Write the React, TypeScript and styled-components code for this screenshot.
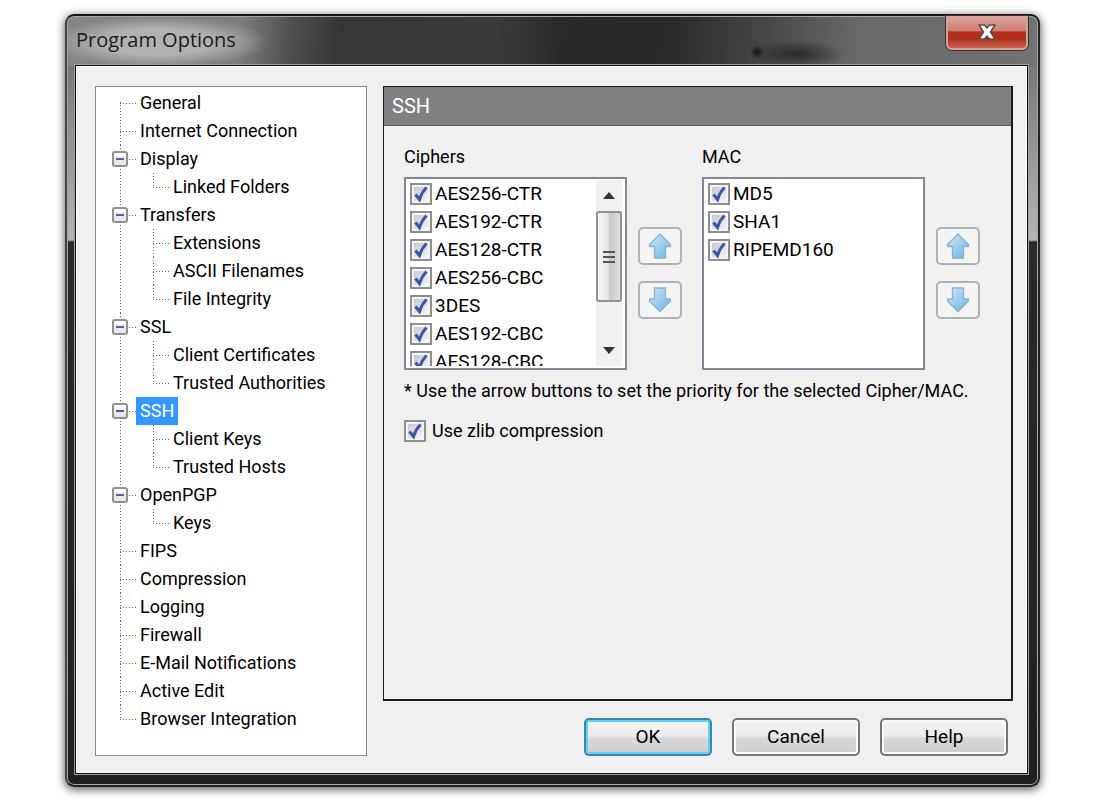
import React from "react";
import styled, { createGlobalStyle, css } from "styled-components";

const Global = createGlobalStyle`
  * { box-sizing: border-box; }
  body { margin: 0; background: #fff; color: #000; font: 18px/28px Roboto, sans-serif; }
  button, input { font: inherit; color: inherit; }
`;

const Page = styled.div`
  padding: 14px 60px 12px 65px;
`;

const Dialog = styled.main`
  display: flex;
  flex-direction: column;
  padding: 0 10px 11px 8px;
  border: 2px solid #222;
  border-top-color: #161616;
  border-left-color: #444;
  border-radius: 9px;
  background:
    radial-gradient(ellipse 110px 26px at 92px 26px, rgba(190, 190, 190, 0.8) 50%, rgba(190, 190, 190, 0) 100%) 0 0 / 100% 50px no-repeat,
    radial-gradient(circle 7px at 690px 36px, rgba(10, 10, 10, 0.8), rgba(10, 10, 10, 0)) 0 0 / 100% 50px no-repeat,
    radial-gradient(ellipse 48px 14px at 730px 38px, rgba(20, 20, 20, 0.65), rgba(20, 20, 20, 0)) 0 0 / 100% 50px no-repeat,
    linear-gradient(95deg, #858585 0, #7c7c7c 18%, #505050 23%, #363636 28%, #3a3a3a 44%, #282828 52%, #2a2a2a 62%, #444 71%, #686868 81%, #727272 100%) 0 0 / 100% 50px no-repeat,
    linear-gradient(#777 50px, #8a8a8a 100px, #b4b4b4 224px, #2a2a2a 226px, #202020 100%);
  box-shadow: inset 0 0 0 1px #a5a5a5, 0 2px 9px 1px rgba(0, 0, 0, 0.6);
`;

const TitleBar = styled.header`
  display: flex;
  align-items: flex-start;
  justify-content: space-between;
  height: 49px;
`;

const Title = styled.h1`
  margin: 0;
  padding: 10px 0 0 1px;
  font: 400 20px/28px "Open Sans", sans-serif;
  color: #1c1c1c;
`;

const CloseButton = styled.button`
  display: grid;
  place-items: center;
  width: 82px;
  height: 34px;
  margin: 0;
  padding: 0;
  border: 2px solid #c4a8a4;
  border-top: 0;
  border-radius: 0 0 6px 6px;
  background: linear-gradient(#dba79f 0, #cf7d72 46%, #b9301b 50%, #a92f1c 70%, #d0604a 100%);
  box-shadow: 0 0 0 1px #4a2c28;
`;

const Client = styled.div`
  display: grid;
  grid-template-columns: 272px 1fr;
  gap: 16px;
  padding: 20px 14px 17px 19px;
  border: 1px solid #111;
  background: #f0f0f0;
  box-shadow: 0 0 0 1px #a0a0a0, inset 0 0 0 1px #fff;
`;

const TreeBox = styled.nav`
  padding: 2px 16px 22px 16px;
  border: 1px solid #828790;
  background: #fff;
`;

const dots = "#666 0 1px, transparent 1px 3px";

const Branch = styled.ul`
  margin: 0;
  padding: 0;
  list-style: none;
`;

const Item = styled.li<{ $edge?: "first" | "last" }>`
  padding-left: 8px;
  background: repeating-linear-gradient(180deg, ${dots}) 8px
    ${(p) => (p.$edge === "first" ? "13px" : "0")} / 1px
    ${(p) => (p.$edge === "last" ? "14px" : "100%")} no-repeat;
`;

const ItemRow = styled.div`
  display: flex;
  align-items: center;
  height: 28px;
`;

const Stem = styled.span`
  width: 16px;
  height: 1px;
  background: repeating-linear-gradient(90deg, ${dots});
`;

const Toggle = styled.button`
  display: grid;
  place-items: center;
  width: 16px;
  height: 16px;
  margin: 0 -8px 0 -8px;
  padding: 0;
  border: 2px solid #919191;
  border-radius: 3px;
  background: linear-gradient(#fff, #e2e2e2);
  z-index: 1;
  &::before {
    content: "";
    width: 8px;
    height: 2px;
    background: #4b5fa8;
  }
`;

const ItemLink = styled.a<{ $selected?: boolean }>`
  padding: 0 4px;
  color: ${(p) => (p.$selected ? "#fff" : "#000")};
  background: ${(p) => (p.$selected ? "#3399ff" : "transparent")};
  text-decoration: none;
  white-space: nowrap;
`;

const SubBranch = styled(Branch)`
  padding-left: 25px;
`;

const Side = styled.div`
  display: flex;
  flex-direction: column;
  min-width: 0;
`;

const Panel = styled.section`
  flex: 1;
  border: 2px solid #1a1a1a;
  border-width: 1px 2px 2px 1px;
`;

const PanelTitle = styled.h2`
  margin: 0;
  padding: 5px 8px;
  border-bottom: 1px solid #555;
  font-size: 20px;
  font-weight: 400;
  line-height: 28px;
  color: #fff;
  background: #808080;
`;

const PanelBody = styled.div`
  padding: 17px 20px;
`;

const Lists = styled.div`
  display: flex;
  gap: 20px;
`;

const ListGroup = styled.div`
  display: grid;
  grid-template-columns: 223px 44px;
  column-gap: 11px;
`;

const ListLabel = styled.h3`
  grid-column: 1 / -1;
  margin: 0 0 6px;
  font-size: inherit;
  font-weight: 400;
`;

const ListBox = styled.div`
  display: flex;
  height: 193px;
  padding: 1px 4px 2px;
  border: 2px solid #828790;
  background: #fff;
  font-size: 19px;
`;

const Options = styled.div`
  flex: 1;
  overflow: hidden;
`;

const Check = styled.label<{ $gap?: number }>`
  display: flex;
  align-items: center;
  gap: ${(p) => p.$gap ?? 3}px;
  height: 28px;
  white-space: nowrap;
`;

const Box = styled.span`
  display: grid;
  flex: none;
  width: 22px;
  height: 22px;
  > * { grid-area: 1 / 1; }
  svg { pointer-events: none; }
`;

const Tick = styled.input`
  appearance: none;
  width: 22px;
  height: 22px;
  margin: 0;
  border: 2px solid #8e8f8f;
  background: linear-gradient(135deg, #c4c9d2, #f2f3f5) content-box, #f4f4f4;
  padding: 2px;
  & + svg { visibility: hidden; }
  &:checked + svg { visibility: visible; }
`;

const ScrollBar = styled.div`
  display: flex;
  flex-direction: column;
  align-items: center;
  justify-content: space-between;
  width: 26px;
  margin-right: -1px;
  background: #f1f1f1;
`;

const ScrollArrow = styled.button`
  display: grid;
  place-items: center;
  width: 26px;
  height: 31px;
  padding: 0;
  border: 0;
  background: none;
`;

const Thumb = styled.div`
  display: grid;
  place-content: center;
  gap: 3px;
  width: 26px;
  height: 93px;
  margin-bottom: 33px;
  border: 2px solid #929292;
  border-radius: 3px;
  background: linear-gradient(90deg, #f8f8f8, #e6e6e8 45%, #c8c9cc 55%, #dedede);
  span { width: 12px; height: 2px; background: #555; }
`;

const ArrowButtons = styled.div`
  display: flex;
  flex-direction: column;
  gap: 16px;
  padding-top: 50px;
`;

const ArrowButton = styled.button`
  display: grid;
  place-items: center;
  width: 44px;
  height: 38px;
  padding: 0;
  border: 2px solid #adb2b5;
  border-radius: 5px;
  background: #f4f4f4;
`;

const Note = styled.p`
  margin: 7px 0 12px;
  white-space: nowrap;
`;

const Footer = styled.footer`
  display: flex;
  justify-content: flex-end;
  gap: 20px;
  padding: 17px 5px 0 0;
`;

const PushButton = styled.button<{ $primary?: boolean }>`
  width: 128px;
  height: 38px;
  padding: 0;
  border: 2px solid #767676;
  border-radius: 5px;
  background: linear-gradient(#f4f4f4 0, #ebebeb 48%, #dadada 52%, #cdcdcd 100%);
  box-shadow: inset 0 0 0 2px #fafafa;
  font-size: 19px;
  ${(p) =>
    p.$primary &&
    css`
      border-color: #3a87ac;
      box-shadow: inset 0 0 0 2px #63cdf2;
    `}
`;

type Node = { name: string; children?: string[] };

const tree: Node[] = [
  { name: "General" },
  { name: "Internet Connection" },
  { name: "Display", children: ["Linked Folders"] },
  { name: "Transfers", children: ["Extensions", "ASCII Filenames", "File Integrity"] },
  { name: "SSL", children: ["Client Certificates", "Trusted Authorities"] },
  { name: "SSH", children: ["Client Keys", "Trusted Hosts"] },
  { name: "OpenPGP", children: ["Keys"] },
  { name: "FIPS" },
  { name: "Compression" },
  { name: "Logging" },
  { name: "Firewall" },
  { name: "E-Mail Notifications" },
  { name: "Active Edit" },
  { name: "Browser Integration" },
];

const ciphers = ["AES256-CTR", "AES192-CTR", "AES128-CTR", "AES256-CBC", "3DES", "AES192-CBC", "AES128-CBC"];
const macs = ["MD5", "SHA1", "RIPEMD160"];

function CheckItem({ label, gap }: { label: string; gap?: number }) {
  return (
    <Check $gap={gap}>
      <Box>
        <Tick type="checkbox" defaultChecked />
        <svg width="22" height="22" viewBox="0 0 22 22" fill="none">
          <path d="M5.5 11.5 L9.5 16.5 C11 11.5 13 8 16.5 4.5" stroke="#3f55a3" strokeWidth="3" />
        </svg>
      </Box>
      {label}
    </Check>
  );
}

function BlueArrow({ down }: { down?: boolean }) {
  return (
    <svg width="24" height="28" viewBox="0 0 24 28">
      <defs>
        <linearGradient id={down ? "blueDown" : "blueUp"} x1="0" y1="0" x2="1" y2="1">
          <stop offset="0" stopColor="#cbe8f9" />
          <stop offset="1" stopColor="#6bb3e2" />
        </linearGradient>
      </defs>
      <path
        d={down ? "M6.5 2 H17.5 V13 H22.5 V15 L12 25.5 L1.5 15 V13 H6.5 Z" : "M12 2 L22.5 12.5 V14.5 H17.5 V26 H6.5 V14.5 H1.5 V12.5 Z"}
        fill={`url(#${down ? "blueDown" : "blueUp"})`}
        stroke="#8ab2cc"
        strokeWidth="1.3"
        strokeLinejoin="round"
      />
    </svg>
  );
}

function Movers({ list }: { list: string }) {
  return (
    <ArrowButtons>
      <ArrowButton aria-label={`Move ${list} up`}><BlueArrow /></ArrowButton>
      <ArrowButton aria-label={`Move ${list} down`}><BlueArrow down /></ArrowButton>
    </ArrowButtons>
  );
}

export default function App() {
  return (
    <Page>
      <Global />
      <Dialog>
        <TitleBar>
          <Title>Program Options</Title>
          <CloseButton aria-label="Close">
            <svg width="22" height="20" viewBox="0 0 22 20">
              <path d="M3 3 H8.5 L11 6 L13.5 3 H19 L14.5 10 L19 17 H13.5 L11 14 L8.5 17 H3 L7.5 10 Z" fill="#fff" stroke="#5f4a50" strokeWidth="1.6" strokeLinejoin="round" />
            </svg>
          </CloseButton>
        </TitleBar>
        <Client>
          <TreeBox aria-label="Option pages">
            <Branch>
              {tree.map((node, i) => (
                <Item key={node.name} $edge={i === 0 ? "first" : i === tree.length - 1 ? "last" : undefined}>
                  <ItemRow>
                    {node.children && <Toggle aria-label={`Collapse ${node.name}`} />}
                    <Stem />
                    <ItemLink href="#" $selected={node.name === "SSH"}>{node.name}</ItemLink>
                  </ItemRow>
                  {node.children && (
                    <SubBranch>
                      {node.children.map((child, j, all) => (
                        <Item key={child} $edge={j === all.length - 1 ? "last" : undefined}>
                          <ItemRow>
                            <Stem />
                            <ItemLink href="#">{child}</ItemLink>
                          </ItemRow>
                        </Item>
                      ))}
                    </SubBranch>
                  )}
                </Item>
              ))}
            </Branch>
          </TreeBox>
          <Side>
            <Panel>
              <PanelTitle>SSH</PanelTitle>
              <PanelBody>
                <Lists>
                  <ListGroup>
                    <ListLabel>Ciphers</ListLabel>
                    <ListBox>
                      <Options>{ciphers.map((c) => <CheckItem key={c} label={c} />)}</Options>
                      <ScrollBar>
                        <ScrollArrow aria-label="Scroll up">
                          <svg width="14" height="8" viewBox="0 0 14 8"><path d="M1 8 L7 1 L13 8 Z" fill="#333" /></svg>
                        </ScrollArrow>
                        <Thumb><span /><span /><span /></Thumb>
                        <ScrollArrow aria-label="Scroll down">
                          <svg width="14" height="8" viewBox="0 0 14 8"><path d="M1 0 L7 7 L13 0 Z" fill="#333" /></svg>
                        </ScrollArrow>
                      </ScrollBar>
                    </ListBox>
                    <Movers list="cipher" />
                  </ListGroup>
                  <ListGroup>
                    <ListLabel>MAC</ListLabel>
                    <ListBox>
                      <Options>{macs.map((m) => <CheckItem key={m} label={m} />)}</Options>
                    </ListBox>
                    <Movers list="MAC" />
                  </ListGroup>
                </Lists>
                <Note>* Use the arrow buttons to set the priority for the selected Cipher/MAC.</Note>
                <CheckItem label="Use zlib compression" gap={6} />
              </PanelBody>
            </Panel>
            <Footer>
              <PushButton $primary>OK</PushButton>
              <PushButton>Cancel</PushButton>
              <PushButton>Help</PushButton>
            </Footer>
          </Side>
        </Client>
      </Dialog>
    </Page>
  );
}
